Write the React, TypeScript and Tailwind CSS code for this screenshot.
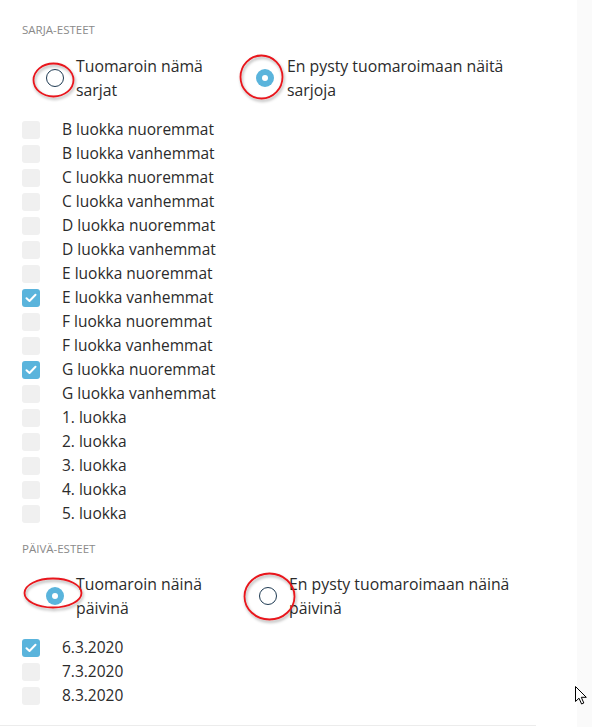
import React from 'react';

const font = { fontFamily: '"Open Sans", "Liberation Sans", sans-serif' };

const sarjat = [
  { label: 'B luokka nuoremmat', checked: false },
  { label: 'B luokka vanhemmat', checked: false },
  { label: 'C luokka nuoremmat', checked: false },
  { label: 'C luokka vanhemmat', checked: false },
  { label: 'D luokka nuoremmat', checked: false },
  { label: 'D luokka vanhemmat', checked: false },
  { label: 'E luokka nuoremmat', checked: false },
  { label: 'E luokka vanhemmat', checked: true },
  { label: 'F luokka nuoremmat', checked: false },
  { label: 'F luokka vanhemmat', checked: false },
  { label: 'G luokka nuoremmat', checked: true },
  { label: 'G luokka vanhemmat', checked: false },
  { label: '1. luokka', checked: false },
  { label: '2. luokka', checked: false },
  { label: '3. luokka', checked: false },
  { label: '4. luokka', checked: false },
  { label: '5. luokka', checked: false },
];

const paivat = [
  { label: '6.3.2020', checked: true },
  { label: '7.3.2020', checked: false },
  { label: '8.3.2020', checked: false },
];

const Radio: React.FC<{ checked: boolean }> = ({ checked }) =>
  checked ? (
    <span className="flex h-[18px] w-[18px] shrink-0 items-center justify-center rounded-full bg-[#5ab4dc]">
      <span className="h-[6px] w-[6px] rounded-full bg-white" />
    </span>
  ) : (
    <span className="h-[18px] w-[18px] shrink-0 rounded-full border-[1.5px] border-[#1e3a52] bg-white" />
  );

const Checkbox: React.FC<{ checked: boolean }> = ({ checked }) =>
  checked ? (
    <span className="flex h-[18px] w-[18px] shrink-0 items-center justify-center rounded-[3px] bg-[#5ab4dc]">
      <svg width="12" height="10" viewBox="0 0 12 10">
        <path d="M1.5 5.2 L4.5 8 L10.5 1.8" stroke="#fff" strokeWidth="2" fill="none" strokeLinecap="round" strokeLinejoin="round" />
      </svg>
    </span>
  ) : (
    <span className="h-[18px] w-[18px] shrink-0 rounded-[3px] bg-[#f0f0f0]" />
  );

const CheckList: React.FC<{ items: { label: string; checked: boolean }[] }> = ({ items }) => (
  <div className="flex flex-col">
    {items.map((it) => (
      <label key={it.label} className="flex h-6 items-center gap-[22px]">
        <Checkbox checked={it.checked} />
        <span className="text-[15.5px] text-[#2b2b2b]">{it.label}</span>
      </label>
    ))}
  </div>
);

const Heading: React.FC<{ children: React.ReactNode }> = ({ children }) => (
  <h3 className="text-[11.5px] leading-[14px] uppercase text-[#8a8a8a]">{children}</h3>
);

export default function App() {
  return (
    <div className="flex h-[727px] w-[592px] bg-[#fafafa]" style={font}>
      <div className="relative w-[577px] bg-white">
        <div className="w-[536px] border-b border-[#ececec] pb-[17px] pl-[22px] pt-[23px]">
          <Heading>Sarja-esteet</Heading>

          <div className="mt-[17px] flex pl-[24px]">
            <div className="flex w-[210px] items-center gap-3">
              <Radio checked={false} />
              <span className="w-[150px] text-[15.8px] leading-6 text-[#2b2b2b]">Tuomaroin nämä sarjat</span>
            </div>
            <div className="flex items-center gap-[13px]">
              <Radio checked={true} />
              <span className="w-[240px] text-[15.8px] leading-6 text-[#2b2b2b]">En pysty tuomaroimaan näitä sarjoja</span>
            </div>
          </div>

          <div className="mt-[16px]">
            <CheckList items={sarjat} />
          </div>

          <div className="mt-4">
            <Heading>Päivä-esteet</Heading>
          </div>

          <div className="mt-4 flex pl-[24px]">
            <div className="flex w-[213px] items-center gap-3">
              <Radio checked={true} />
              <span className="w-[150px] text-[15.8px] leading-6 text-[#2b2b2b]">Tuomaroin näinä päivinä</span>
            </div>
            <div className="flex items-center gap-3">
              <Radio checked={false} />
              <span className="w-[240px] text-[15.8px] leading-6 text-[#2b2b2b]">En pysty tuomaroimaan näinä päivinä</span>
            </div>
          </div>

          <div className="mt-4">
            <CheckList items={paivat} />
          </div>
        </div>

        {/* red annotation rings drawn over the screenshot */}
        <svg className="pointer-events-none absolute left-0 top-0" width="577" height="727">
          <defs>
            <filter id="sh" x="-30%" y="-30%" width="160%" height="160%">
              <feDropShadow dx="1" dy="2" stdDeviation="1.5" floodColor="#000" floodOpacity="0.35" />
            </filter>
          </defs>
          <g fill="none" stroke="#e8141b" strokeWidth="1.8" filter="url(#sh)">
            <ellipse cx="53.5" cy="80" rx="20" ry="16.5" />
            <ellipse cx="261.5" cy="77" rx="21" ry="21.5" />
            <ellipse cx="53" cy="593" rx="28.5" ry="14.5" />
            <ellipse cx="269.5" cy="596.5" rx="25" ry="23" />
          </g>
        </svg>
      </div>

      {/* mouse cursor */}
      <svg className="pointer-events-none absolute left-[575px] top-[686px]" width="13" height="19" viewBox="0 0 13 19">
        <path d="M0.5 0.5 L0.5 15.5 L4 12.2 L6.6 18 L8.8 17 L6.3 11.3 L11.3 11.3 Z" fill="#fff" stroke="#000" strokeWidth="1" strokeLinejoin="round" />
      </svg>
    </div>
  );
}
